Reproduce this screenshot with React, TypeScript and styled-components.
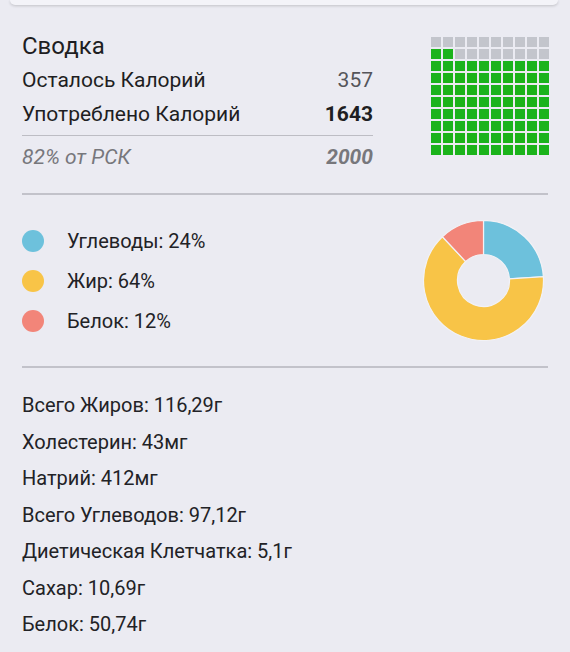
import React from "react";
import styled, { createGlobalStyle } from "styled-components";

const GlobalStyle = createGlobalStyle`
  html, body {
    margin: 0;
    padding: 0;
    background: #ebebf2;
  }
  body {
    font-family: Roboto, "Noto Sans", "Liberation Sans", sans-serif;
    color: #1f1f22;
    overflow: hidden;
  }
`;

const Page = styled.div`
  width: 570px;
  height: 652px;
  overflow: hidden;
`;

// the bottom edge of the card above, scrolled almost out of view
const CardEdge = styled.div`
  height: 5px;
  margin: 0 12px 0 10px;
  background: #f3f3f8;
  border-radius: 0 0 12px 12px;
  box-shadow: 0 1px 3px rgba(0, 0, 0, 0.18);
`;

const Content = styled.div`
  padding: 0 22px;
`;

const Summary = styled.section`
  display: flex;
  justify-content: space-between;
  align-items: flex-start;
  padding-top: 24px;
  padding-bottom: 19px;
`;

const SummaryText = styled.div`
  width: 351px;
`;

const Title = styled.div`
  font-size: 24px;
  line-height: 34px;
  color: #1e1e22;
`;

const Row = styled.div<{ $muted?: boolean }>`
  display: flex;
  justify-content: space-between;
  font-size: 21px;
  line-height: 34px;
  color: ${(p) => (p.$muted ? "#77777c" : "#1e1e22")};
  font-style: ${(p) => (p.$muted ? "italic" : "normal")};
`;

const Value = styled.span<{ $bold?: boolean; $tone?: string }>`
  font-weight: ${(p) => (p.$bold ? 700 : 400)};
  color: ${(p) => p.$tone ?? "inherit"};
`;

const Rule = styled.hr<{ $light?: boolean }>`
  border: none;
  height: ${(p) => (p.$light ? "1px" : "2px")};
  background: ${(p) => (p.$light ? "#bdbdc4" : "#c2c2ca")};
  margin: 0;
`;

const InnerRule = styled(Rule)`
  margin: 4px 0 4px;
`;

const Waffle = styled.div`
  display: grid;
  grid-template-columns: repeat(10, 10px);
  grid-auto-rows: 10px;
  gap: 2px;
  margin-top: 8px;
  margin-right: -1px;
`;

const Cell = styled.div<{ $on: boolean }>`
  background: ${(p) => (p.$on ? "#1bb31b" : "#c3c5cc")};
`;

const Macros = styled.section`
  display: flex;
  justify-content: space-between;
  align-items: center;
  padding: 25px 4px 25px 0;
`;

const Legend = styled.div`
  display: flex;
  flex-direction: column;
`;

const LegendItem = styled.div`
  display: flex;
  align-items: center;
  gap: 23px;
  height: 40px;
  font-size: 20px;
  color: #222226;
`;

const Dot = styled.span<{ $color: string }>`
  width: 22px;
  height: 22px;
  border-radius: 50%;
  background: ${(p) => p.$color};
  flex-shrink: 0;
`;

const Nutrients = styled.ul`
  list-style: none;
  margin: 0;
  padding: 19px 0 0;
`;

const Nutrient = styled.li`
  font-size: 20px;
  line-height: 36.5px;
  color: #222226;
`;

const macros = [
  { label: "Углеводы", pct: 24, color: "#6dc1dc" },
  { label: "Жир", pct: 64, color: "#f8c447" },
  { label: "Белок", pct: 12, color: "#f28579" },
];

const nutrients = [
  "Всего Жиров: 116,29г",
  "Холестерин: 43мг",
  "Натрий: 412мг",
  "Всего Углеводов: 97,12г",
  "Диетическая Клетчатка: 5,1г",
  "Сахар: 10,69г",
  "Белок: 50,74г",
];

function arc(cx: number, cy: number, R: number, r: number, a0: number, a1: number) {
  const pt = (rad: number, a: number) => {
    const t = (a - 90) * (Math.PI / 180);
    return [cx + rad * Math.cos(t), cy + rad * Math.sin(t)];
  };
  const large = a1 - a0 > 180 ? 1 : 0;
  const [x0, y0] = pt(R, a0);
  const [x1, y1] = pt(R, a1);
  const [x2, y2] = pt(r, a1);
  const [x3, y3] = pt(r, a0);
  return `M${x0} ${y0} A${R} ${R} 0 ${large} 1 ${x1} ${y1} L${x2} ${y2} A${r} ${r} 0 ${large} 0 ${x3} ${y3} Z`;
}

const Donut: React.FC = () => {
  let start = 0;
  return (
    <svg width="121" height="121" viewBox="0 0 121 121">
      {macros.map((m) => {
        const end = start + (m.pct / 100) * 360;
        const d = arc(60.5, 60.5, 60, 26, start, end);
        start = end;
        return <path key={m.label} d={d} fill={m.color} stroke="#f2f2f6" strokeWidth={1.2} />;
      })}
    </svg>
  );
};

export default function App() {
  const consumed = 82;
  // filled from the bottom row up, left to right inside a row
  const cells = Array.from({ length: 100 }, (_, i) => {
    const row = Math.floor(i / 10);
    const col = i % 10;
    return (9 - row) * 10 + col < consumed;
  });

  return (
    <Page>
      <GlobalStyle />
      <CardEdge />
      <Content>
        <Summary>
          <SummaryText>
            <Title>Сводка</Title>
            <Row>
              <span>Осталось Калорий</span>
              <Value $tone="#55555a">357</Value>
            </Row>
            <Row>
              <span>Употреблено Калорий</span>
              <Value $bold>1643</Value>
            </Row>
            <InnerRule $light />
            <Row $muted>
              <span>82% от РСК</span>
              <Value $bold>2000</Value>
            </Row>
          </SummaryText>
          <Waffle>
            {cells.map((on, i) => (
              <Cell key={i} $on={on} />
            ))}
          </Waffle>
        </Summary>
        <Rule />
        <Macros>
          <Legend>
            {macros.map((m) => (
              <LegendItem key={m.label}>
                <Dot $color={m.color} />
                {m.label}: {m.pct}%
              </LegendItem>
            ))}
          </Legend>
          <Donut />
        </Macros>
        <Rule />
        <Nutrients>
          {nutrients.map((n) => (
            <Nutrient key={n}>{n}</Nutrient>
          ))}
        </Nutrients>
      </Content>
    </Page>
  );
}
